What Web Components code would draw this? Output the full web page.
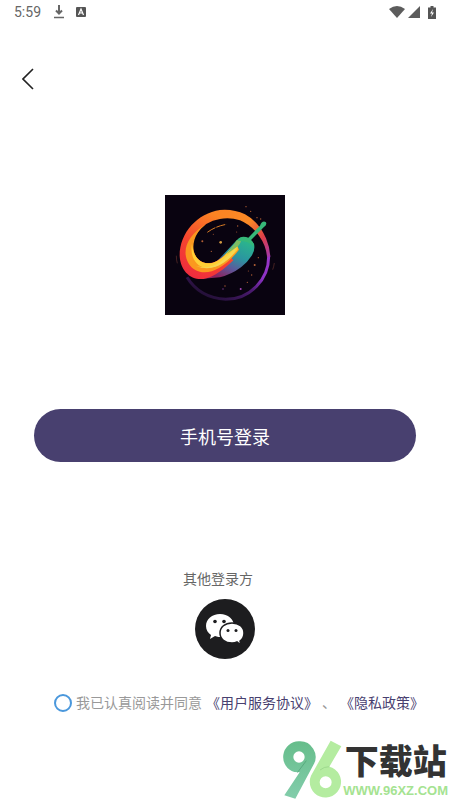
<!DOCTYPE html>
<html lang="zh-CN">
<head>
<meta charset="utf-8">
<meta name="viewport" content="width=device-width, initial-scale=1">
<title>登录</title>
<style>
  body {
    margin: 0;
    background: #fff;
    font-family: Roboto, "Noto Sans CJK SC", sans-serif;
  }
</style>
</head>
<body>
<login-page></login-page>

<script>
class BaseElement extends HTMLElement {
  constructor() {
    super();
    this.attachShadow({ mode: "open" });
  }

  connectedCallback() {
    this.shadowRoot.innerHTML = this.template();
  }
}

class StatusBar extends BaseElement {
  template() {
    return `
    <time>5:59</time>
    <svg width="12" height="14" viewBox="0 0 12 14"><path d="M6 0v8M3 5.500l3 3 3-3" fill="none" stroke="#666" stroke-width="2"/><path d="M1 12.500h10" stroke="#666" stroke-width="1.500"/></svg>
    <svg width="10" height="10" viewBox="0 0 10 10"><rect width="10" height="10" rx="1" fill="#555"/><path d="M2.500 8L5 2l2.500 6M3.500 6h3" fill="none" stroke="#fff" stroke-width="1.200"/></svg>
    <div class="right">
      <svg width="16" height="12" viewBox="0 0 16 12"><path d="M0 3Q8-3 16 3L8 12z" fill="#5c5c5c"/></svg>
      <svg width="12" height="12" viewBox="0 0 12 12"><path d="M12 0v12H0z" fill="#5c5c5c"/></svg>
      <svg class="battery" width="8" height="13" viewBox="0 0 8 13"><path d="M2.500 0h3v1.500H8V13H0V1.500h2.500z" fill="#555"/><path d="M5 3L2 7.500h2L3 11l3-4.500H4z" fill="#fff"/></svg>
    </div>
    <style>
      :host {
        display: flex;
        align-items: center;
        height: 24px;
        padding: 0 14px;
      }

      time {
        color: #666;
        font-size: 14px;
        margin-right: 12px;
      }

      svg + svg {
        margin-left: 11px;
      }

      .right {
        display: flex;
        align-items: center;
        margin-left: auto;
      }

      .right svg + svg {
        margin-left: 3px;
      }

      .right .battery {
        margin: 0 0 0 8px;
      }
    </style>`;
  }
}

class NavBar extends BaseElement {
  template() {
    return `
    <button type="button" aria-label="返回">
      <svg width="12" height="22" viewBox="0 0 12 22"><path d="M11 1L1 11l10 10" fill="none" stroke="#222" stroke-width="1.600"/></svg>
    </button>
    <style>
      :host {
        display: flex;
        align-items: center;
        height: 50px;
        padding: 30px 14px 0;
      }

      button {
        display: flex;
        padding: 8px;
        border: 0;
        background: none;
      }
    </style>`;
  }
}

class AppLogo extends BaseElement {
  template() {
    return `
    <svg width="120" height="120" viewBox="0 0 360 360" role="img" aria-label="logo">
      <defs>
        <linearGradient id="ring" x1="0" y1="1" x2="1" y2="0">
          <stop offset=".15" stop-color="#241038"/>
          <stop offset=".5" stop-color="#4b1a70"/>
          <stop offset=".7" stop-color="#8b32c4"/>
          <stop offset="1" stop-color="#9a36c8"/>
        </linearGradient>
        <linearGradient id="outer" gradientUnits="userSpaceOnUse" x1="60" y1="240" x2="150" y2="60">
          <stop offset="0" stop-color="#ee2b3e"/>
          <stop offset=".5" stop-color="#f6452f"/>
          <stop offset="1" stop-color="#fb8423"/>
        </linearGradient>
        <linearGradient id="tail" gradientUnits="userSpaceOnUse" x1="165" y1="50" x2="314" y2="195">
          <stop offset="0" stop-color="#fb8423"/>
          <stop offset=".4" stop-color="#fb8a26"/>
          <stop offset=".7" stop-color="#dd3f48"/>
          <stop offset="1" stop-color="#9a36b8"/>
        </linearGradient>
        <linearGradient id="body" gradientUnits="userSpaceOnUse" x1="225" y1="130" x2="170" y2="250">
          <stop offset="0" stop-color="#2bb58c"/>
          <stop offset=".4" stop-color="#2a96a0"/>
          <stop offset=".7" stop-color="#5c5a9c"/>
          <stop offset="1" stop-color="#8c2460"/>
        </linearGradient>
      </defs>
      <rect width="360" height="360" fill="#090310"/>
      <path d="M311 182A129 129 0 0 1 182 313Q104 309 66 247" fill="none" stroke="url(#ring)" stroke-width="9"/>
      <path d="M215 136Q222 126 234 127Q255 128 267 146Q271 165 261 181Q247 203 228 217Q200 238 165 247L105 252L150 205z" fill="url(#body)"/>
      <path d="M165 45C98 55 44 112 44 182C46 226 76 256 115 252C148 246 178 222 205 196L186 174C155 205 126 213 103 196C79 176 77 136 98 113Q119 80 165 72z" fill="url(#outer)"/>
      <path d="M164 45Q205 41 240 58Q281 80 303 130Q314 155 316 185H306Q303 151 282 122Q260 91 225 76Q195 66 164 72z" fill="url(#tail)"/>
      <path d="M124 87C70 119 48 164 70 204C89 237 129 239 162 219Q195 200 222 164L215 148C184 178 166 207 129 205C85 202 73 153 98 113Q105 102 124 87z" fill="#fb981f"/>
      <path d="M81 146C83 180 101 203 126 205C158 207 182 179 206 151Q220 150 218 164C197 190 158 222 121 219C92 214 74 183 81 146z" fill="#ffd035"/>
      <path d="M93 213Q130 224 168 200L215 156Q211 178 178 202Q136 231 93 213z" fill="#f5d853"/>
      <path d="M185 178Q202 157 215 136L229 133Q227 151 212 158z" fill="#7fbd62"/>
      <path d="M218 137C225 121 240 125 250 128L285 92Q291 76 302 81Q308 88 296 97L258 135Q268 143 265 155Q252 136 218 137z" fill="#36b879"/>
      <path d="M127 112Q151 94 184 88" fill="none" stroke="#d57a25" stroke-width="3" stroke-dasharray="28 3"/>
      <path d="M34 182q0 14 3 23M328 204q-2 13-5 20" fill="none" stroke="#63302a" stroke-width="2"/>
      <g fill="#b35f35">
        <circle cx="112" cy="139" r="3"/><circle cx="167" cy="142" r="4" fill="#d49a42"/>
        <circle cx="145" cy="118" r="1.500"/><circle cx="139" cy="169" r="2"/>
        <circle cx="218" cy="93" r="2"/><circle cx="215" cy="111" r="1.500"/>
        <circle cx="243" cy="35" r="2"/><circle cx="257" cy="49" r="2"/>
        <circle cx="276" cy="68" r="2"/><circle cx="287" cy="72" r="2"/>
        <circle cx="269" cy="210" r="3"/><circle cx="280" cy="188" r="2"/>
        <circle cx="260" cy="240" r="2"/><circle cx="247" cy="262" r="2"/>
        <circle cx="227" cy="282" r="3" fill="#a544b7"/><circle cx="174" cy="282" r="2" fill="#89439b"/>
        <circle cx="180" cy="273" r="2"/><circle cx="250" cy="228" r="1.500"/>
      </g>
    </svg>
    <style>
      :host {
        display: flex;
        justify-content: center;
      }
    </style>`;
  }
}

class PrimaryButton extends BaseElement {
  template() {
    return `
    <button type="button"><slot></slot></button>
    <style>
      :host {
        display: block;
      }

      button {
        width: 100%;
        height: 53px;
        border: 0;
        border-radius: 27px;
        background: #48406f;
        color: #fff;
        font: inherit;
        font-size: 18px;
      }
    </style>`;
  }
}

class OtherLogin extends BaseElement {
  template() {
    return `
    <span><slot></slot></span>
    <button type="button" aria-label="微信登录">
      <svg width="60" height="60" viewBox="0 0 60 60">
        <circle cx="30" cy="30" r="30" fill="#1d1d1f"/>
        <path d="M25 15C17 15 11 20 11 27c0 4 2 7 5 9l-1 4 5-3c2 1 5 1 7 1 8-1 12-5 12-11 0-7-6-12-14-12z" fill="#fff"/>
        <path d="M37 24c-7 0-12 4-12 10s5 10 12 10c2 0 3 0 5-1l4 3-1-4c3-2 4-5 4-8 0-6-5-10-12-10z" fill="#fff" stroke="#1d1d1f" stroke-width="1.500"/>
        <g fill="#1d1d1f"><circle cx="20" cy="22.500" r="1.800"/><circle cx="29" cy="22.500" r="1.800"/><circle cx="33" cy="31.500" r="1.500"/><circle cx="41" cy="31.500" r="1.500"/></g>
      </svg>
    </button>
    <style>
      :host {
        display: flex;
        flex-direction: column;
        align-items: center;
        gap: 10px;
      }

      span {
        padding-right: 14px;
        color: #666;
        font-size: 14px;
        line-height: 20px;
      }

      button {
        display: flex;
        padding: 0;
        border: 0;
        border-radius: 50%;
        background: none;
      }
    </style>`;
  }
}

class AgreementRow extends BaseElement {
  template() {
    return `
    <input type="checkbox" id="agree">
    <label for="agree">我已认真阅读并同意</label>
    <a href="#service">《用户服务协议》</a>
    <span>、</span>
    <a href="#privacy">《隐私政策》</a>
    <style>
      :host {
        display: flex;
        justify-content: center;
        align-items: center;
        gap: 4px;
        color: #999;
        font-size: 14px;
        line-height: 20px;
        white-space: nowrap;
      }

      input {
        appearance: none;
        box-sizing: border-box;
        flex: none;
        width: 18px;
        height: 18px;
        margin: 0;
        border: 2px solid #4b98dc;
        border-radius: 50%;
      }

      a {
        color: #48406f;
        text-decoration: none;
      }
    </style>`;
  }
}

class SiteMark extends BaseElement {
  template() {
    return `
    <svg width="60" height="60" viewBox="0 0 180 180" role="img" aria-label="96">
      <defs>
        <linearGradient id="nine" x1="0" y1="0" x2="0" y2="1">
          <stop offset="0" stop-color="#66bd8b"/>
          <stop offset="1" stop-color="#83cdab"/>
        </linearGradient>
      </defs>
      <path d="M47 4a47 47 0 0 0-13 92l16 1L4 166l33 10L91 75A47 47 0 0 0 47 4zM48 34a17 17 0 1 1 0 34 17 17 0 0 1 0-34z" fill="url(#nine)" fill-rule="evenodd"/>
      <path d="M70 62L43 98" stroke="#4c9d72" stroke-width="2"/>
      <path d="M143 2l32 17-36 61a47 47 0 1 1-55 27zM128 109a18 18 0 1 0 0 36 18 18 0 0 0 0-36z" fill="#b4eca0" fill-rule="evenodd"/>
      <path d="M139 80q-16 0-28 10" fill="none" stroke="#91cf83" stroke-width="2"/>
    </svg>
    <div>
      <strong>下载站</strong>
      <small>WWW.96XZ.COM</small>
    </div>
    <style>
      :host {
        display: flex;
        justify-content: flex-end;
        align-items: center;
        padding-right: 2px;
      }

      div {
        display: flex;
        flex-direction: column;
        align-items: center;
      }

      strong {
        color: #333;
        font-size: 34px;
        font-weight: 900;
        line-height: 42px;
      }

      small {
        color: #a5e391;
        font: bold 13px/16px "Liberation Sans", sans-serif;
      }
    </style>`;
  }
}

class LoginPage extends BaseElement {
  template() {
    return `
    <status-bar></status-bar>
    <nav-bar></nav-bar>
    <main>
      <app-logo></app-logo>
      <primary-button>手机号登录</primary-button>
      <other-login>其他登录方</other-login>
      <agreement-row></agreement-row>
    </main>
    <site-mark></site-mark>
    <style>
      :host {
        display: flex;
        flex-direction: column;
        min-height: 100vh;
      }

      main {
        padding-top: 91px;
      }

      primary-button {
        margin: 94px 34px 0;
      }

      other-login {
        margin-top: 107px;
      }

      agreement-row {
        margin-top: 34px;
        padding: 0 26px 0 54px;
      }

      site-mark {
        margin-top: auto;
      }
    </style>`;
  }
}

customElements.define("status-bar", StatusBar);
customElements.define("nav-bar", NavBar);
customElements.define("app-logo", AppLogo);
customElements.define("primary-button", PrimaryButton);
customElements.define("other-login", OtherLogin);
customElements.define("agreement-row", AgreementRow);
customElements.define("site-mark", SiteMark);
customElements.define("login-page", LoginPage);
</script>
</body>
</html>
